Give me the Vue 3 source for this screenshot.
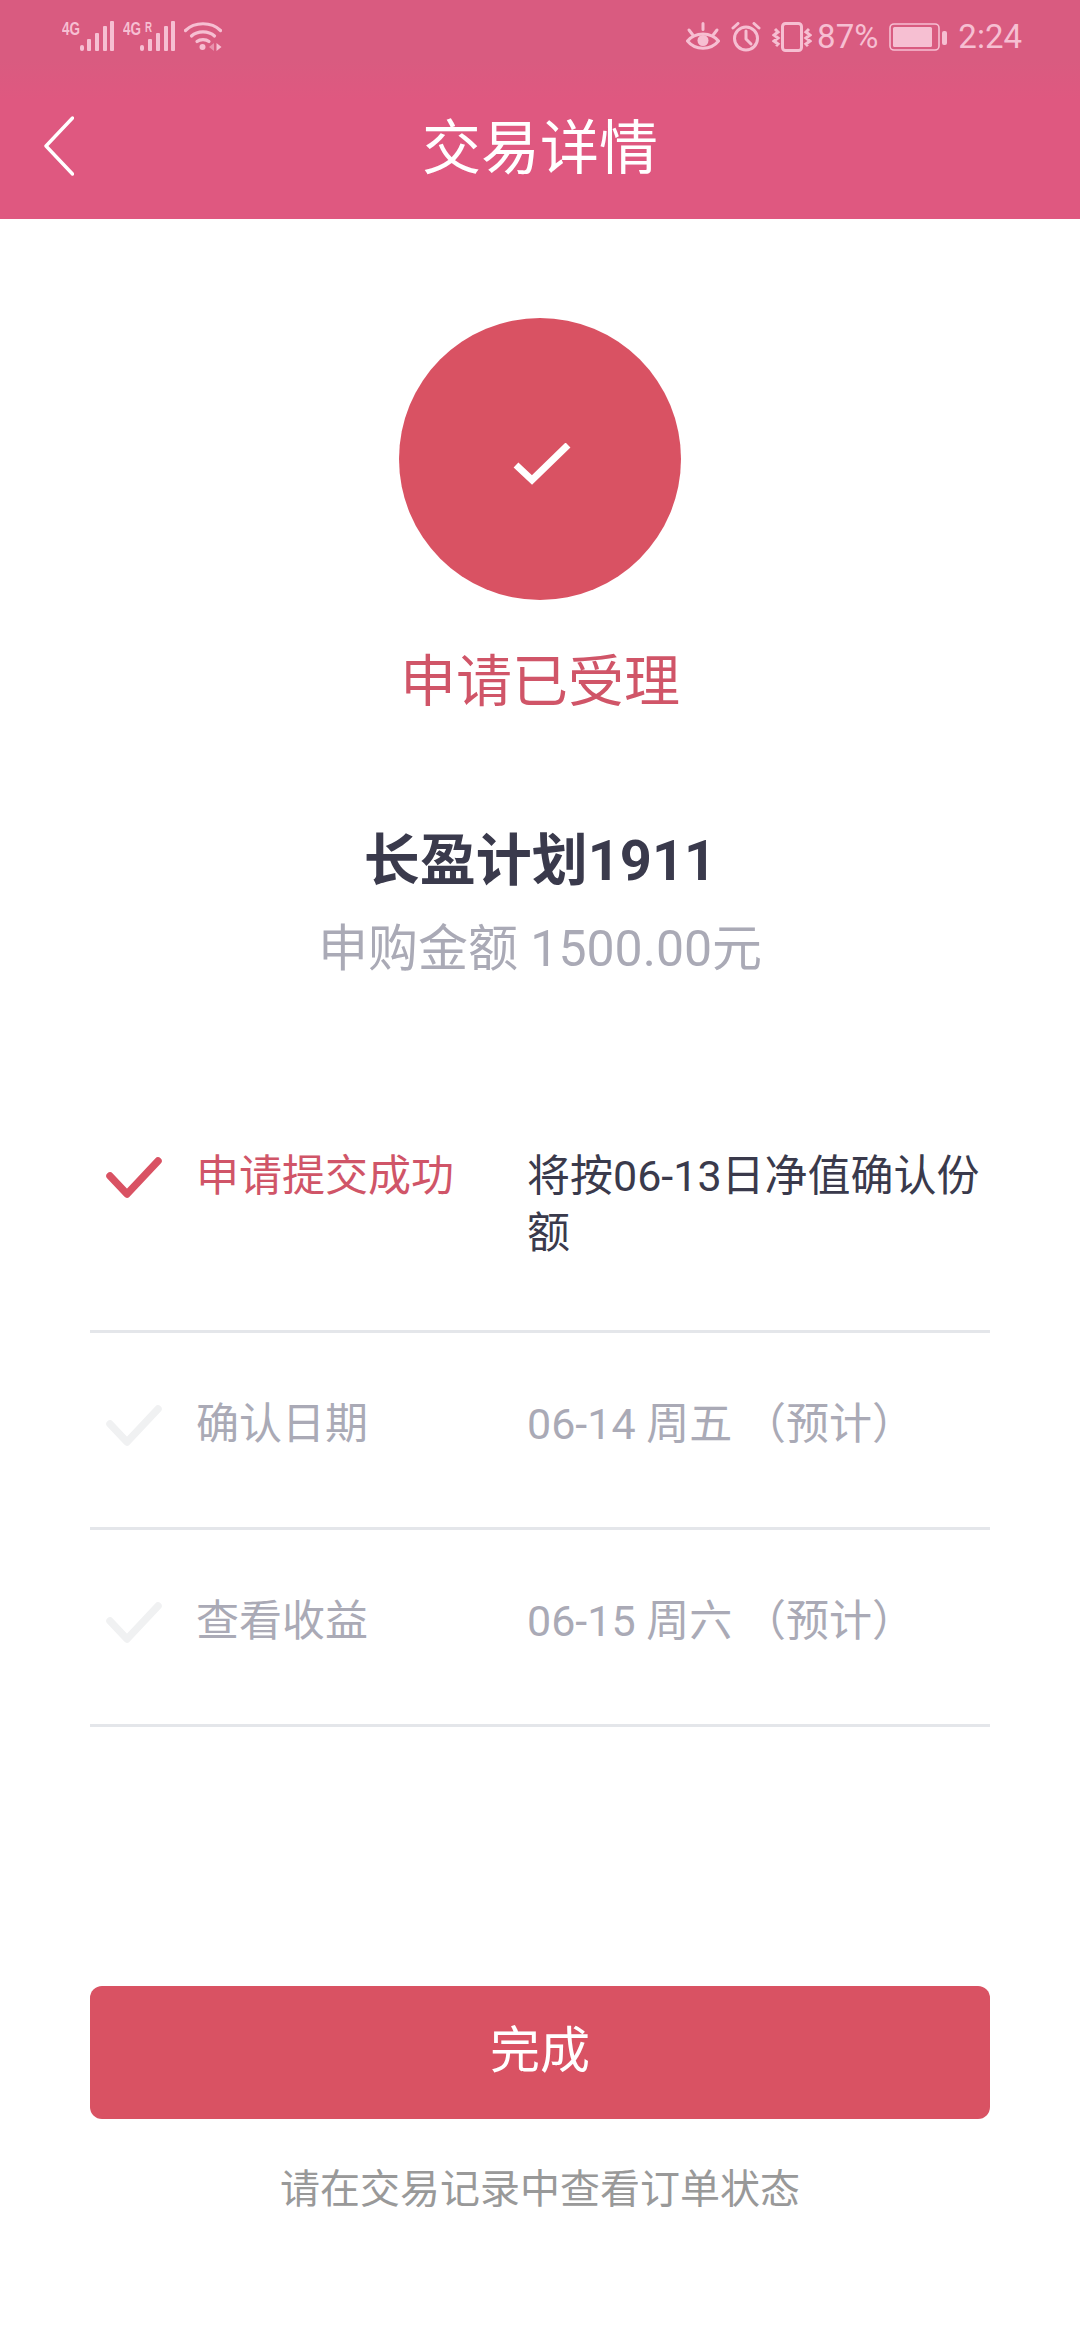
<template>
  <div class="page">
    <header class="top">
      <div class="status">
        <div class="status-left">
          <svg class="sig" width="52" height="38" viewBox="0 -6 52 38">
            <text x="0" y="14" class="net" textLength="18" lengthAdjust="spacingAndGlyphs">4G</text>
            <g fill="currentColor">
              <rect x="18" y="24" width="4" height="6" rx="2" />
              <rect x="25" y="18" width="4" height="12" rx="1" />
              <rect x="33" y="12" width="4" height="18" rx="1" />
              <rect x="41" y="5" width="4" height="25" rx="1" />
              <rect x="48" y="0" width="4" height="30" rx="1" />
            </g>
          </svg>
          <svg class="sig" width="52" height="38" viewBox="0 -6 52 38">
            <text x="0" y="14" class="net" textLength="18" lengthAdjust="spacingAndGlyphs">4G</text>
            <text x="22" y="11" class="net small" textLength="7" lengthAdjust="spacingAndGlyphs">R</text>
            <g fill="currentColor">
              <rect x="17" y="24" width="4" height="6" rx="2" />
              <rect x="25" y="18" width="4" height="12" rx="1" />
              <rect x="33" y="12" width="4" height="18" rx="1" />
              <rect x="41" y="5" width="4" height="25" rx="1" />
              <rect x="48" y="0" width="4" height="30" rx="1" />
            </g>
          </svg>
          <svg width="38" height="32" viewBox="0 0 38 32" fill="none" stroke="currentColor" stroke-width="3.2">
            <path d="M1.5 9.5C10.5 0.5 27.5 0.5 36.5 9.5" stroke-linecap="round" />
            <path d="M7.5 15C13.5 9.5 24.5 9.5 30.5 15" stroke-linecap="round" />
            <path d="M13 20.5C16 18 22 18 25 20.5" stroke-linecap="round" />
            <circle cx="18.5" cy="26" r="3" fill="currentColor" stroke="none" />
            <path d="M30 22v8l-5-4z" fill="currentColor" stroke="none" opacity="0.55" />
            <path d="M32.5 22v8l5-4z" fill="currentColor" stroke="none" />
          </svg>
        </div>
        <div class="status-right">
          <svg width="34" height="30" viewBox="0 0 34 30" fill="none" stroke="currentColor" stroke-width="3">
            <path d="M1.5 19C9 9.5 25 9.5 32.5 19C25 28.5 9 28.5 1.5 19Z" />
            <circle cx="17" cy="18.5" r="5.5" fill="currentColor" stroke="none" />
            <path d="M3 8l3.5 4.5M17 1.5v6M31 8l-3.5 4.5" stroke-linecap="round" />
          </svg>
          <svg width="30" height="30" viewBox="0 0 30 30" fill="none" stroke="currentColor" stroke-width="3">
            <circle cx="15" cy="16.5" r="11.5" />
            <path d="M15 9v8l5 5" stroke-linecap="round" stroke-linejoin="round" />
            <path d="M2 6l5-4.5M28 6l-5-4.5" stroke-linecap="round" />
          </svg>
          <svg width="40" height="30" viewBox="0 0 40 30" fill="none" stroke="currentColor" stroke-width="3">
            <rect x="10.5" y="1.5" width="19" height="27" rx="3" />
            <path d="M3 7l3 3-4 3 4 3-4 3 4 3-2 2M37 7l-3 3 4 3-4 3 4 3-4 3 2 2" stroke-width="3" />
          </svg>
          <span class="pct">87%</span>
          <svg width="58" height="28" viewBox="0 0 58 28" fill="none">
            <rect x="1" y="1" width="49" height="26" rx="4" stroke="currentColor" stroke-width="1.6" />
            <rect x="4" y="4" width="39" height="20" rx="1.5" fill="currentColor" />
            <rect x="53" y="8" width="5" height="14" rx="2" fill="currentColor" />
          </svg>
          <span class="time">2:24</span>
        </div>
      </div>
      <nav class="nav">
        <svg class="back" width="30" height="60" viewBox="0 0 30 60" fill="none" stroke="#fff" stroke-width="3.4" stroke-linecap="round" stroke-linejoin="round">
          <path d="M28.5 2L2 30L28.5 58" />
        </svg>
        <h1 class="nav-title">交易详情</h1>
        <span></span>
      </nav>
    </header>

    <main class="main">
      <section class="hero">
        <div class="circle">
          <svg width="58" height="42" viewBox="0 0 58 42" fill="none" stroke="#fff" stroke-width="7" stroke-linecap="butt" stroke-linejoin="miter">
            <path d="M3 22L19 37L55 2" />
          </svg>
        </div>
        <div class="state">申请已受理</div>
        <div class="product">长盈计划1911</div>
        <div class="amount">申购金额 1500.00元</div>
      </section>

      <section class="steps">
        <div v-for="step in steps" :key="step.label" class="step" :class="{ done: step.done }">
          <svg class="tick" width="56" height="44" viewBox="0 0 56 44" fill="none" stroke-width="7.5" stroke-linecap="round" stroke-linejoin="round">
            <path d="M4 20L21 38L52 5" />
          </svg>
          <div class="step-label">{{ step.label }}</div>
          <div class="step-value">{{ step.value }}</div>
        </div>
      </section>

      <button class="finish">完成</button>
      <p class="hint">请在交易记录中查看订单状态</p>
    </main>
  </div>
</template>

<script setup>
const steps = [
  { label: '申请提交成功', value: '将按06-13日净值确认份额', done: true },
  { label: '确认日期', value: '06-14 周五 （预计）', done: false },
  { label: '查看收益', value: '06-15 周六 （预计）', done: false }
]
</script>

<style>
html,
body {
  background: #fff;
}
</style>

<style scoped>
.page {
  width: 1080px;
  height: 2340px;
  overflow: hidden;
  background: #fff;
  font-family: Roboto, "Noto Sans CJK SC", sans-serif;
}

.top {
  height: 219px;
  background: linear-gradient(180deg, #d95b80 0, #d95b80 60px, #df5880 100px, #df5880 100%);
}

.status {
  height: 72px;
  padding: 0 58px 0 62px;
  display: flex;
  align-items: center;
  justify-content: space-between;
  color: #f6bfd2;
}
.status-left,
.status-right {
  display: flex;
  align-items: center;
}
.status-left {
  gap: 9px;
  padding-top: 2px;
}
.sig {
  margin-top: -6px;
}
.status-right {
  gap: 11px;
  padding-top: 2px;
}
.net {
  font-family: "Liberation Sans", sans-serif;
  font-size: 19px;
  font-weight: 700;
  fill: currentColor;
}
.net.small {
  font-size: 15px;
}
.pct,
.time {
  font-size: 33px;
  line-height: 36px;
  letter-spacing: 0;
}
.pct {
  margin-left: -6px;
}

.nav {
  height: 147px;
  padding: 6px 44px 0;
  box-sizing: border-box;
  display: grid;
  grid-template-columns: 1fr auto 1fr;
  align-items: center;
}
.back {
  display: block;
  margin-top: -6px;
}
.nav-title {
  margin: 0;
  font-size: 59px;
  font-weight: 400;
  line-height: 80px;
  color: #fff;
  text-align: center;
}

.main {
  padding: 99px 90px 0;
}

.hero {
  display: flex;
  flex-direction: column;
  align-items: center;
}
.circle {
  box-sizing: border-box;
  width: 282px;
  height: 282px;
  padding: 9px 0 0 3px;
  border-radius: 50%;
  background: #d95263;
  display: flex;
  align-items: center;
  justify-content: center;
}
.state {
  margin-top: 47px;
  font-size: 56px;
  line-height: 70px;
  color: #d05568;
}
.product {
  margin-top: 109px;
  font-size: 56px;
  font-weight: 700;
  line-height: 70px;
  color: #3a3a4c;
}
.amount {
  margin-top: 23px;
  font-size: 50px;
  line-height: 60px;
  color: #aaaab6;
}

.steps {
  margin-top: 106px;
}
.step {
  box-sizing: border-box;
  min-height: 197px;
  padding: 63px 0 68px 16px;
  display: grid;
  grid-template-columns: 90px 331px 1fr;
  align-items: start;
  border-bottom: 3px solid #e4e6ea;
  font-size: 43px;
  line-height: 57px;
  color: #aaaab6;
}
.tick {
  display: block;
  margin-top: 8px;
  stroke: #f0f1f2;
}
.step.done .tick {
  stroke: #d95263;
}
.step.done .step-label {
  color: #d05568;
}
.step.done .step-value {
  color: #3a3a4c;
}

.finish {
  display: block;
  width: 100%;
  height: 133px;
  margin-top: 259px;
  padding: 0 0 14px;
  border: none;
  border-radius: 12px;
  background: #d95263;
  font-family: inherit;
  font-size: 50px;
  color: #fff;
}
.hint {
  margin: 46px 0 0;
  font-size: 40px;
  line-height: 50px;
  text-align: center;
  color: #999;
}
</style>
